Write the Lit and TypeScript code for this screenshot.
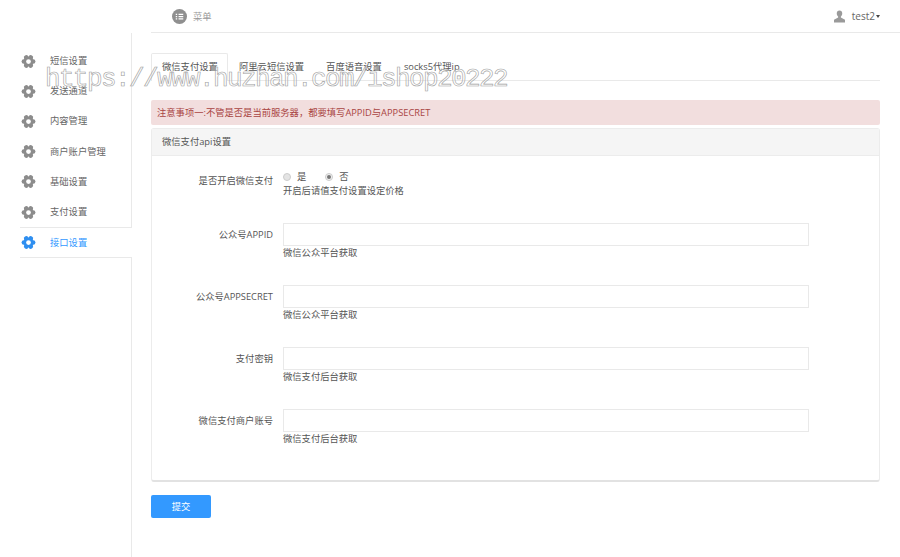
import { LitElement, html, css, svg } from "lit";
import { customElement } from "lit/decorators.js";

const lobes = [0, 60, 120, 180, 240, 300].map(
  (a) => svg`<circle cx="12" cy="4.600" r="3.700" transform="rotate(${a + 30} 12 12)"/>`
);
const gear = svg`<circle cx="12" cy="12" r="8"/>${lobes}<circle class="hole" cx="12" cy="12" r="3.800"/>`;

const menu = ["短信设置", "发送通道", "内容管理", "商户账户管理", "基础设置", "支付设置", "接口设置"];
const tabs = ["微信支付设置", "阿里云短信设置", "百度语音设置", "socks5代理ip"];
const fields = [
  ["公众号APPID", "微信公众平台获取"],
  ["公众号APPSECRET", "微信公众平台获取"],
  ["支付密钥", "微信支付后台获取"],
  ["微信支付商户账号", "微信支付后台获取"],
];

@customElement("app-root")
export class AppRoot extends LitElement {
  static styles = css`
    :host {
      display: block;
      position: relative;
      width: 900px;
      height: 557px;
      overflow: hidden;
      background: #fff;
      color: #555;
      font: 9.3px/14px "Open Sans", "Noto Sans CJK SC", sans-serif;
    }
    .top {
      height: 32px;
      margin-left: 151px;
      border-bottom: 1px solid #e9e9e9;
      display: flex;
      align-items: center;
      padding: 0 20px 0 21px;
    }
    .menu-btn { display: flex; align-items: center; gap: 6px; color: #999; padding-top: 1px; }
    .menu-btn svg { width: 15px; height: 15px; }
    .user { margin-left: auto; display: flex; align-items: center; gap: 7px; color: #666; font-size: 10px; }
    .user svg { width: 11px; height: 13px; }
    .caret {
      display: inline-block;
      margin-left: -6px;
      border: 2.5px solid transparent;
      border-top: 3px solid #444;
      border-bottom: 0;
    }
    .body { display: flex; height: 524px; }
    .side {
      width: 131px;
      padding-top: 13px;
      border-right: 1px solid #e9e9e9;
      box-sizing: content-box;
    }
    .item {
      height: 30.2px;
      margin-left: 20px;
      display: flex;
      align-items: center;
      gap: 14px;
      color: #666;
    }
    .item svg { width: 15px; height: 15px; fill: #8c8c8c; flex: none; margin-left: 1px; }
    .item svg .hole { fill: #fff; }
    .item.on {
      color: #3399ff;
      background: #fff;
      height: 31px;
      box-sizing: border-box;
      margin-right: -1px;
      border-top: 1px solid #e9e9e9;
      border-bottom: 1px solid #e9e9e9;
    }
    .item.on svg { fill: #2f8ff0; }
    .main { flex: 1; padding: 20px 20px 0 19px; min-width: 0; }
    .tabs { display: flex; border-bottom: 1px solid #e9e9e9; height: 27px; box-sizing: content-box; }
    .tab { padding: 7px 11px 0; color: #555; white-space: nowrap; }
    .tab.on {
      background: #fff;
      border: 1px solid #e9e9e9;
      border-bottom: 0;
      border-radius: 2px 2px 0 0;
      height: 28px;
      box-sizing: border-box;
      padding: 6px 10px 0;
      width: 77px;
    }
    .alert {
      margin-top: 19px;
      height: 25px;
      background: #f2dede;
      color: #a94442;
      border-radius: 2px;
      padding: 0 6px;
      display: flex;
      align-items: center;
    }
    .panel {
      margin-top: 3px;
      height: 354px;
      box-sizing: border-box;
      border: 1px solid #ececec;
      border-bottom: 2px solid #e2e2e2;
      border-radius: 3px;
      background: #fff;
    }
    .head {
      height: 27px;
      background: #f5f5f5;
      border-bottom: 1px solid #ececec;
      box-sizing: border-box;
      display: flex;
      align-items: center;
      padding: 0 10px;
    }
    .rows { padding-top: 13px; }
    .row { display: grid; grid-template-columns: 121px 526px; column-gap: 10px; }
    .row.radio { height: 54px; }
    .row.field { height: 62px; }
    .lab { text-align: right; line-height: 23px; color: #555; white-space: nowrap; }
    .radios { display: flex; align-items: center; height: 14px; margin-top: 1px; color: #555; }
    .dot {
      width: 8px; height: 8px;
      box-sizing: border-box;
      border: 1px solid #ccc;
      border-radius: 50%;
      background: #e4e4e4;
      position: relative;
      margin-right: 6px;
    }
    .dot.sel { background: #f2f2f2; }
    .dot.sel::after {
      content: "";
      position: absolute;
      inset: 1px;
      border-radius: 50%;
      background: #777;
    }
    .radios span { margin-right: 19px; }
    .help { color: #555; line-height: 13px; }
    .in { height: 23px; box-sizing: border-box; border: 1px solid #e9e9e9; background: #fff; }
    .btn {
      display: flex;
      align-items: center;
      justify-content: center;
      width: 60px;
      height: 23px;
      margin-top: 13px;
      background: #3399ff;
      color: #fff;
      border-radius: 2px;
    }
    .mark {
      position: absolute;
      left: 45px;
      top: 63px;
      font: 400 26px/32px "Liberation Mono", monospace;
      letter-spacing: -1.6px;
      color: rgba(255, 255, 255, 0.4);
      -webkit-text-stroke: 0.6px #a0a0a0;
      white-space: nowrap;
      pointer-events: none;
    }
  `;

  render() {
    return html`
      <div class="top">
        <div class="menu-btn">
          <svg viewBox="0 0 16 16"><circle cx="8" cy="8" r="8" fill="#8f8f8f"/><path d="M4 5h1.500v1.300H4zM7 5h5v1.300H7zM4 7.400h1.500v1.300H4zM7 7.400h5v1.300H7zM4 9.800h1.500v1.300H4zM7 9.800h5v1.300H7z" fill="#fff"/></svg>
          菜单
        </div>
        <div class="user">
          <svg viewBox="0 0 12 13"><path d="M6 0c1.900 0 3 1.300 3 3.300 0 1.500-.7 2.700-1.500 3.300v1.100L12 10v3H0v-3l4.500-2.300V6.600C3.700 6 3 4.800 3 3.300 3 1.300 4.100 0 6 0z" fill="#9a9a9a"/></svg>
          test2<i class="caret"></i>
        </div>
      </div>
      <div class="body">
        <nav class="side">
          ${menu.map(
            (m, i) => html`<div class="item ${i === 6 ? "on" : ""}"><svg viewBox="0 0 24 24">${gear}</svg>${m}</div>`
          )}
        </nav>
        <main class="main">
          <div class="tabs">
            ${tabs.map((t, i) => html`<div class="tab ${i === 0 ? "on" : ""}">${t}</div>`)}
          </div>
          <div class="alert">注意事项一:不管是否是当前服务器，都要填写APPID与APPSECRET</div>
          <section class="panel">
            <div class="head">微信支付api设置</div>
            <div class="rows">
              <div class="row radio">
                <div class="lab">是否开启微信支付</div>
                <div>
                  <div class="radios">
                    <i class="dot"></i><span>是</span>
                    <i class="dot sel"></i><span>否</span>
                  </div>
                  <div class="help">开启后请值支付设置设定价格</div>
                </div>
              </div>
              ${fields.map(
                ([l, h]) => html`<div class="row field">
                  <div class="lab">${l}</div>
                  <div><div class="in"></div><div class="help">${h}</div></div>
                </div>`
              )}
            </div>
          </section>
          <div class="btn">提交</div>
        </main>
      </div>
      <div class="mark">https://www.huzhan.com/ishop20222</div>
    `;
  }
}
